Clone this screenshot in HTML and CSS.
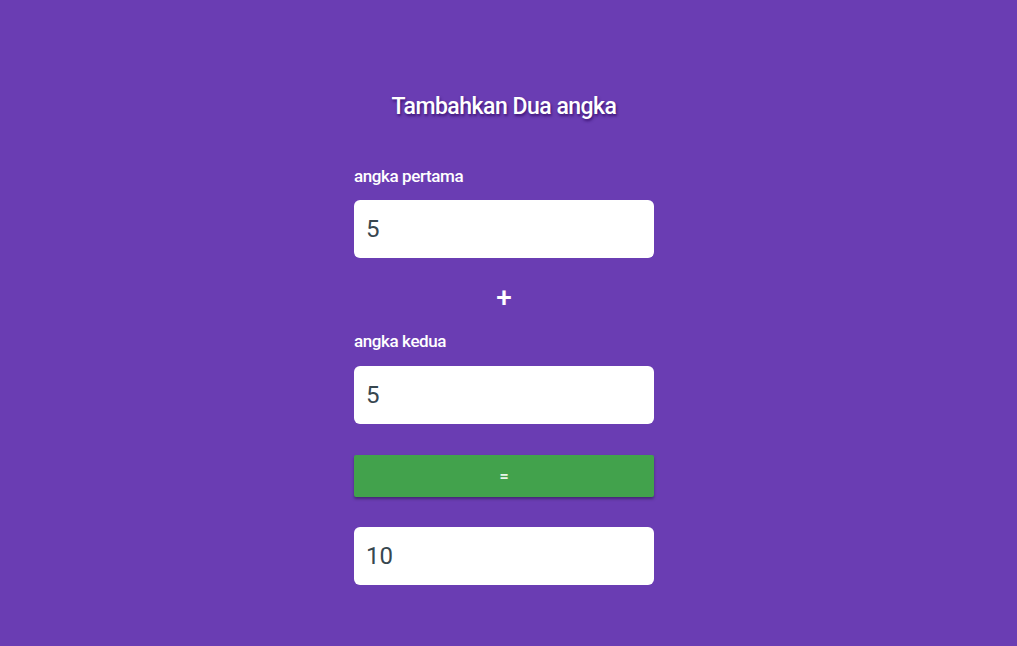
FILE: index.html
```html
<!DOCTYPE html>
<html>
<head>
<meta charset="utf-8">
<title>Tambahkan Dua angka</title>
<link rel="stylesheet" href="styles.css">
</head>
<body>
<main class="calc">
  <h1 class="title">Tambahkan Dua angka</h1>
  <label class="label label-first" for="a">angka pertama</label>
  <input class="field" id="a" type="text" value="5">
  <div class="plus">+</div>
  <label class="label" for="b">angka kedua</label>
  <input class="field" id="b" type="text" value="5">
  <button class="equals" type="button">=</button>
  <input class="field result" type="text" value="10">
</main>
</body>
</html>
```

FILE: styles.css
```css
html, body {
  margin: 0;
  padding: 0;
  background: #6a3db3;
  height: 100%;
}
body {
  font-family: "Roboto", "Liberation Sans", sans-serif;
  color: #fff;
  padding-right: 9px;
}
.calc {
  width: 300px;
  margin: 0 auto;
  padding-top: 90px;
  display: flex;
  flex-direction: column;
}
.title {
  margin: 0;
  font-size: 23px;
  line-height: 34px;
  font-weight: 500;
  text-align: center;
  letter-spacing: -0.5px;
  text-shadow: 1px 2px 3px rgba(40, 0, 90, 0.7);
}
.label {
  display: block;
  font-size: 17px;
  line-height: 24px;
  font-weight: 500;
  letter-spacing: -0.4px;
  margin-top: 16px;
  margin-bottom: 13px;
}
.label-first {
  margin-top: 40px;
  margin-bottom: 12px;
}
.field {
  box-sizing: border-box;
  width: 300px;
  height: 58px;
  border: none;
  border-radius: 6px;
  background: #fff;
  padding: 0 12px;
  font-family: "Roboto", "Liberation Sans", sans-serif;
  font-size: 24px;
  font-weight: 400;
  color: #37474f;
  outline: none;
  margin: 0;
}
.plus {
  text-align: center;
  font-size: 28px;
  line-height: 30px;
  font-weight: 500;
  margin-top: 25px;
}
.equals {
  margin: 31px 0 30px;
  height: 42px;
  border: none;
  border-radius: 2px;
  background: #42a24c;
  color: #e8f5e9;
  font-family: "Roboto", "Liberation Sans", sans-serif;
  font-size: 16px;
  font-weight: 700;
  box-shadow: 0 2px 3px rgba(0, 0, 0, 0.35);
}
```
